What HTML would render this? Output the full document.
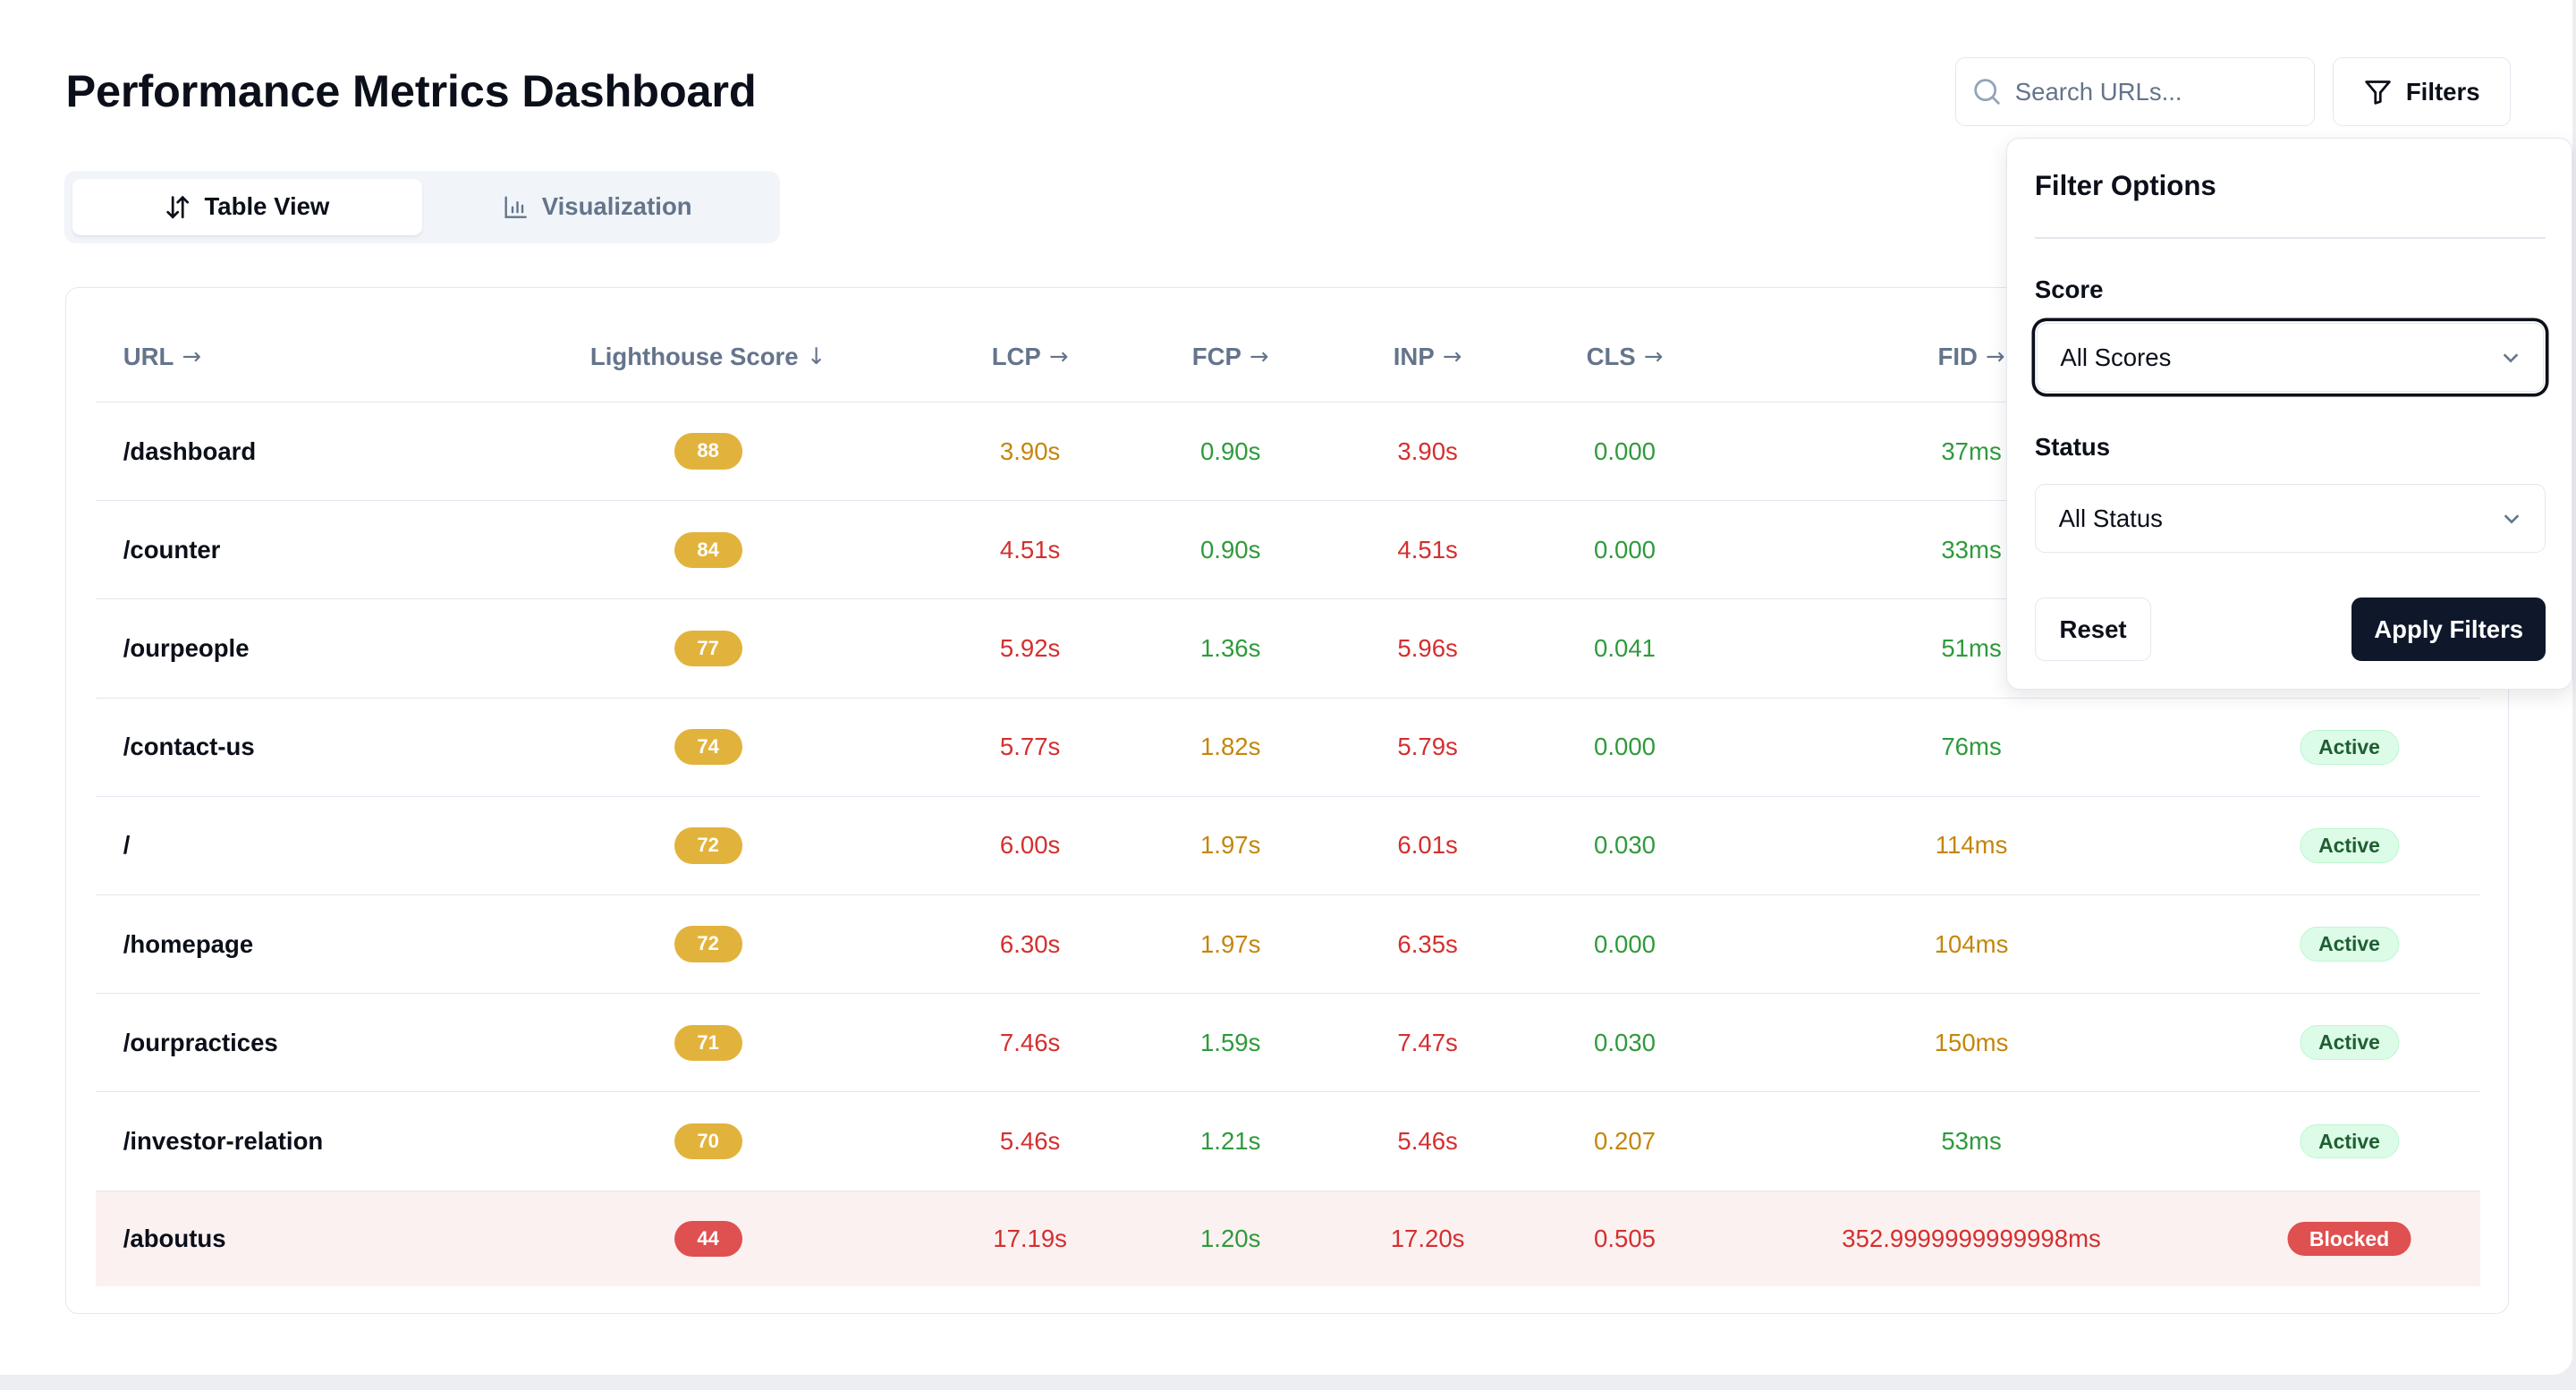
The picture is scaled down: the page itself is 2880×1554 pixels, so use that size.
<!DOCTYPE html>
<html><head><meta charset="utf-8"><style>
html,body{margin:0;padding:0;background:#eceef1;}
body{width:2880px;height:1554px;overflow:hidden;}
#w{zoom:1.83673;width:1568px;height:846px;position:relative;font-family:"Liberation Sans",sans-serif;color:#0b0f19;}
.card{position:absolute;left:0;top:0;width:1566px;height:837px;background:#fff;border-radius:0 0 12px 0;}
.abs{position:absolute;}
h1{position:absolute;left:40px;top:39px;margin:0;font-size:27.5px;font-weight:bold;letter-spacing:-0.1px;}
.tabs{left:39px;top:104px;width:436px;height:44px;background:#f1f5f9;border-radius:7px;}
.tab{position:absolute;top:5px;height:34px;width:213px;display:flex;align-items:center;justify-content:center;font-size:15px;font-weight:bold;gap:8px;}
.t1{left:5px;background:#fff;border-radius:5px;box-shadow:0 1px 2px rgba(0,0,0,.08);}
.t2{left:218px;color:#64748b;}
.tbl{left:40px;top:175px;width:1487px;height:625px;border:1px solid #e2e8f0;border-radius:8px;box-sizing:border-box;}
.row{position:absolute;left:58px;width:1452px;height:60px;border-bottom:1px solid #e2e8f0;box-sizing:border-box;}
.c{position:absolute;top:0;height:100%;display:flex;align-items:center;justify-content:center;font-size:15px;transform:translateX(-50%);white-space:nowrap;}
.hd .c{color:#64748b;font-weight:bold;}
.ar{font-family:"DejaVu Sans",sans-serif;font-weight:normal;font-size:14px;margin-left:5px;}
.url{position:absolute;left:17px;top:0;height:100%;display:flex;align-items:center;font-size:15px;font-weight:bold;}
.b{display:inline-block;padding:0 14px;height:22px;line-height:22px;border-radius:11px;background:#e2b33c;color:#fff;font-size:12px;font-weight:bold;}
.b.r{background:#df5050;}
.st{display:inline-block;padding:0 11px;height:20px;line-height:20px;border-radius:11px;background:#dcfce7;border:1px solid #bbf7d0;color:#1f5e32;font-size:12.5px;font-weight:bold;}
.st.r{background:#df5050;border-color:#df5050;color:#fff;padding:0 13px;}
.a{color:#c4860b}.rd{color:#d42f2f}.g{color:#2f9a3c}
.pop{left:1221px;top:84px;width:345px;height:336px;background:#fff;border:1px solid #e2e8f0;border-radius:8px;box-shadow:0 4px 12px rgba(0,0,0,.1);box-sizing:border-box;}
.lbl{position:absolute;left:17px;font-size:15px;font-weight:bold;}
.sel{position:absolute;left:17px;width:311px;height:42px;border:1px solid #e2e8f0;border-radius:6px;box-sizing:border-box;font-size:15px;display:flex;align-items:center;padding-left:14px;}
.btn{position:absolute;border:1px solid #e2e8f0;border-radius:6px;box-sizing:border-box;display:flex;align-items:center;justify-content:center;font-size:15px;font-weight:bold;}
</style></head><body><div id="w">
<div class="card"></div>
<h1>Performance Metrics Dashboard</h1>
<div class="abs tabs">
 <div class="tab t1"><svg width="16" height="16" viewBox="0 0 16 16" fill="none" stroke="#0b0f19" stroke-width="1.5" stroke-linecap="round"><path d="M5 2v12M2 11l3 3 3-3M11 14V2M8 5l3-3 3 3"/></svg>Table View</div>
 <div class="tab t2"><svg width="16" height="16" viewBox="0 0 16 16" fill="none" stroke="#64748b" stroke-width="1.3" stroke-linecap="round"><path d="M2 2v12h12M6 11V8M9 11V5M12 11V7"/></svg>Visualization</div>
</div>
<div class="abs" style="left:1190px;top:35px;width:219px;height:42px;border:1px solid #e2e8f0;border-radius:6px;box-sizing:border-box;display:flex;align-items:center;padding-left:10px;gap:8px;font-size:15px;color:#64748b;">
 <svg width="18" height="18" viewBox="0 0 18 18" fill="none" stroke="#94a3b8" stroke-width="1.5"><circle cx="8" cy="8" r="6"/><path d="M12.5 12.5l3.5 3.5" stroke-linecap="round"/></svg>Search URLs...</div>
<div class="btn" style="left:1420px;top:35px;width:108px;height:42px;gap:8px;">
 <svg width="18" height="18" viewBox="0 0 18 18" fill="none" stroke="#0b0f19" stroke-width="1.5" stroke-linejoin="round"><path d="M2 3h14l-5.5 6.5V15L7.5 16V9.5z"/></svg>Filters</div>
<div class="abs tbl"></div>
<div class="row hd" style="top:190px;height:55px;">
 <div class="url" style="color:#64748b">URL<span class="ar">→</span></div>
 <div class="c" style="left:373px">Lighthouse Score<span class="ar">↓</span></div>
 <div class="c" style="left:569px">LCP<span class="ar">→</span></div>
 <div class="c" style="left:691px">FCP<span class="ar">→</span></div>
 <div class="c" style="left:811px">INP<span class="ar">→</span></div>
 <div class="c" style="left:931px">CLS<span class="ar">→</span></div>
 <div class="c" style="left:1142px">FID<span class="ar">→</span></div>
</div>
<div class="row" style="top:245px"><div class="url">/dashboard</div><div class="c" style="left:373px"><span class="b">88</span></div><div class="c a" style="left:569px">3.90s</div><div class="c g" style="left:691px">0.90s</div><div class="c rd" style="left:811px">3.90s</div><div class="c g" style="left:931px">0.000</div><div class="c g" style="left:1142px">37ms</div><div class="c" style="left:1372px"><span class="st">Active</span></div></div>
<div class="row" style="top:305px"><div class="url">/counter</div><div class="c" style="left:373px"><span class="b">84</span></div><div class="c rd" style="left:569px">4.51s</div><div class="c g" style="left:691px">0.90s</div><div class="c rd" style="left:811px">4.51s</div><div class="c g" style="left:931px">0.000</div><div class="c g" style="left:1142px">33ms</div><div class="c" style="left:1372px"><span class="st">Active</span></div></div>
<div class="row" style="top:365px"><div class="url">/ourpeople</div><div class="c" style="left:373px"><span class="b">77</span></div><div class="c rd" style="left:569px">5.92s</div><div class="c g" style="left:691px">1.36s</div><div class="c rd" style="left:811px">5.96s</div><div class="c g" style="left:931px">0.041</div><div class="c g" style="left:1142px">51ms</div><div class="c" style="left:1372px"><span class="st">Active</span></div></div>
<div class="row" style="top:425px"><div class="url">/contact-us</div><div class="c" style="left:373px"><span class="b">74</span></div><div class="c rd" style="left:569px">5.77s</div><div class="c a" style="left:691px">1.82s</div><div class="c rd" style="left:811px">5.79s</div><div class="c g" style="left:931px">0.000</div><div class="c g" style="left:1142px">76ms</div><div class="c" style="left:1372px"><span class="st">Active</span></div></div>
<div class="row" style="top:485px"><div class="url">/</div><div class="c" style="left:373px"><span class="b">72</span></div><div class="c rd" style="left:569px">6.00s</div><div class="c a" style="left:691px">1.97s</div><div class="c rd" style="left:811px">6.01s</div><div class="c g" style="left:931px">0.030</div><div class="c a" style="left:1142px">114ms</div><div class="c" style="left:1372px"><span class="st">Active</span></div></div>
<div class="row" style="top:545px"><div class="url">/homepage</div><div class="c" style="left:373px"><span class="b">72</span></div><div class="c rd" style="left:569px">6.30s</div><div class="c a" style="left:691px">1.97s</div><div class="c rd" style="left:811px">6.35s</div><div class="c g" style="left:931px">0.000</div><div class="c a" style="left:1142px">104ms</div><div class="c" style="left:1372px"><span class="st">Active</span></div></div>
<div class="row" style="top:605px"><div class="url">/ourpractices</div><div class="c" style="left:373px"><span class="b">71</span></div><div class="c rd" style="left:569px">7.46s</div><div class="c g" style="left:691px">1.59s</div><div class="c rd" style="left:811px">7.47s</div><div class="c g" style="left:931px">0.030</div><div class="c a" style="left:1142px">150ms</div><div class="c" style="left:1372px"><span class="st">Active</span></div></div>
<div class="row" style="top:665px"><div class="url">/investor-relation</div><div class="c" style="left:373px"><span class="b">70</span></div><div class="c rd" style="left:569px">5.46s</div><div class="c g" style="left:691px">1.21s</div><div class="c rd" style="left:811px">5.46s</div><div class="c a" style="left:931px">0.207</div><div class="c g" style="left:1142px">53ms</div><div class="c" style="left:1372px"><span class="st">Active</span></div></div>
<div class="row" style="top:725px;height:58px;background:#fcf1f1;border-bottom:none"><div class="url">/aboutus</div><div class="c" style="left:373px"><span class="b r">44</span></div><div class="c rd" style="left:569px">17.19s</div><div class="c g" style="left:691px">1.20s</div><div class="c rd" style="left:811px">17.20s</div><div class="c rd" style="left:931px">0.505</div><div class="c rd" style="left:1142px">352.9999999999998ms</div><div class="c" style="left:1372px"><span class="st r">Blocked</span></div></div>
<div class="abs pop">
 <div class="abs" style="left:17px;top:19px;font-size:17px;font-weight:bold;">Filter Options</div>
 <div class="abs" style="left:17px;top:60px;width:311px;height:1px;background:#e2e8f0"></div>
 <div class="lbl" style="top:83px">Score</div>
 <div class="sel" style="top:112px;box-shadow:0 0 0 1px #fff,0 0 0 3px #0b0f19;left:18px;width:309px;">All Scores<svg style="position:absolute;right:14px" width="12" height="12" viewBox="0 0 12 12" fill="none" stroke="#64748b" stroke-width="1.4"><path d="M2 4l4 4 4-4"/></svg></div>
 <div class="lbl" style="top:179px">Status</div>
 <div class="sel" style="top:210px">All Status<svg style="position:absolute;right:14px" width="12" height="12" viewBox="0 0 12 12" fill="none" stroke="#64748b" stroke-width="1.4"><path d="M2 4l4 4 4-4"/></svg></div>
 <div class="btn" style="left:17px;top:279px;width:71px;height:39px;">Reset</div>
 <div class="btn" style="left:210px;top:279px;width:118px;height:39px;background:#0f172a;border-color:#0f172a;color:#fff;">Apply Filters</div>
</div>
</div></body></html>
